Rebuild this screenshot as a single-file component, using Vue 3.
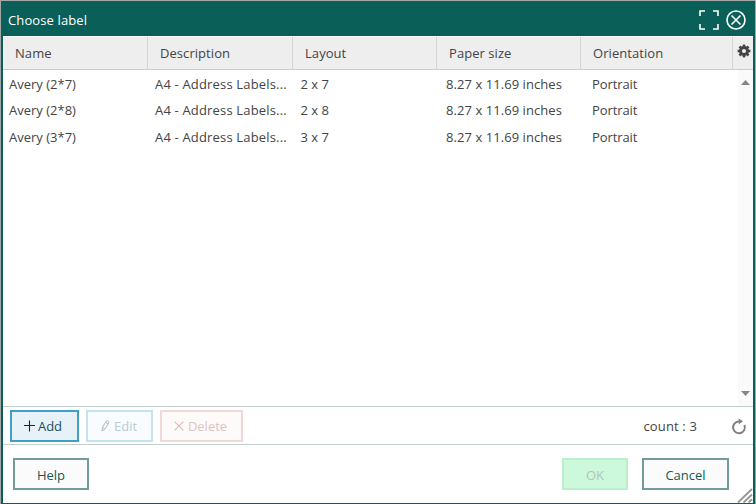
<script setup>
const columns = [
  { title: 'Name', key: 'name' },
  { title: 'Description', key: 'description' },
  { title: 'Layout', key: 'layout' },
  { title: 'Paper size', key: 'paper' },
  { title: 'Orientation', key: 'orientation' },
]
const rows = [
  { name: 'Avery (2*7)', description: 'A4 - Address Labels...', layout: '2 x 7', paper: '8.27 x 11.69 inches', orientation: 'Portrait' },
  { name: 'Avery (2*8)', description: 'A4 - Address Labels...', layout: '2 x 8', paper: '8.27 x 11.69 inches', orientation: 'Portrait' },
  { name: 'Avery (3*7)', description: 'A4 - Address Labels...', layout: '3 x 7', paper: '8.27 x 11.69 inches', orientation: 'Portrait' },
]
const teeth = [0, 45, 90, 135, 180, 225, 270, 315]
</script>

<template>
  <div class="page">
    <div class="dialog">
      <header class="title-bar">
        <span class="title">Choose label</span>
        <svg class="expand" width="20" height="20" viewBox="0 0 20 20">
          <path d="M1 6V1H6M14 1H19V6M19 14V19H14M6 19H1V14" />
        </svg>
        <svg class="close" width="20" height="20" viewBox="0 0 20 20">
          <circle cx="10" cy="10" r="9" />
          <path d="M5.5 5.5L14.5 14.5M14.5 5.5L5.5 14.5" />
        </svg>
      </header>
      <div class="head">
        <div v-for="c in columns" :key="c.key" class="th">{{ c.title }}</div>
        <div class="gear">
          <svg width="14" height="14" viewBox="-7 -7 14 14">
            <rect v-for="a in teeth" :key="a" x="-1.3" y="-6.4" width="2.6" height="3.5" :transform="`rotate(${a})`" fill="#444" />
            <circle r="3.5" fill="none" stroke="#444" stroke-width="2.9" />
          </svg>
        </div>
      </div>
      <div class="body">
        <div class="rows">
          <div v-for="r in rows" :key="r.name" class="row">
            <div v-for="c in columns" :key="c.key" class="td" :class="c.key">{{ r[c.key] }}</div>
          </div>
        </div>
        <div class="scroll">
          <svg width="9" height="5" viewBox="0 0 9 5"><path d="M0 5L4.5 0L9 5Z" fill="#868686" /></svg>
          <svg width="9" height="5" viewBox="0 0 9 5"><path d="M0 0L4.5 5L9 0Z" fill="#868686" /></svg>
        </div>
      </div>
      <div class="toolbar">
        <button class="btn add">
          <svg width="12" height="12" viewBox="0 0 12 12"><path d="M5.5 .5V11.5M0 5.5H11" stroke="#222" stroke-width="1.1" /></svg>
          <span>Add</span>
        </button>
        <button class="btn edit">
          <svg width="9" height="12" viewBox="0 0 9 12"><path d="M1 11L1.5 7.3L5.2 1.2Q6.4 .2 7.4 1.2Q8.2 2 7.6 3.1L3.9 9.3L1 11M4.6 2.3L7 4M1.5 7.3L3.9 9.3" fill="none" stroke="#b4b8ba" stroke-width="1" /></svg>
          <span>Edit</span>
        </button>
        <button class="btn delete">
          <svg width="10" height="10" viewBox="0 0 10 10"><path d="M.6 .6L9.4 9.4M9.4 .6L.6 9.4" stroke="#e0b8b6" stroke-width="1.1" /></svg>
          <span>Delete</span>
        </button>
        <span class="count">count : 3</span>
        <svg class="refresh" width="16" height="17" viewBox="0 0 16 17">
          <path d="M8.5 3.4H7.8A5.9 5.9 0 1 0 13.4 7" fill="none" stroke="#808080" stroke-width="2" />
          <path d="M7.6 .4L12 3.2L7.9 6.2Z" fill="#808080" />
        </svg>
      </div>
      <footer class="footer">
        <button class="btn plain help"><span>Help</span></button>
        <button class="btn ok"><span>OK</span></button>
        <button class="btn plain cancel"><span>Cancel</span></button>
        <svg class="grip" width="16" height="15" viewBox="0 0 16 15">
          <path d="M1 14.5L15 1M6.5 14.5L15 6.5M11.5 14.5L15 11.2" stroke="#999" stroke-width="2" fill="none" />
        </svg>
      </footer>
    </div>
  </div>
</template>

<style>
body {
  margin: 0;
  overflow: hidden;
}
</style>

<style scoped>
.page {
  box-sizing: border-box;
  width: 756px;
  height: 504px;
  padding: 1px 1px 0;
  background: #a3a8a7;
  font-family: "Open Sans", "Noto Sans", sans-serif;
  font-size: 13px;
  color: #444;
}
.dialog {
  box-sizing: border-box;
  height: 503px;
  padding: 0 2px 1px;
  background: #0a5f58;
  display: flex;
  flex-direction: column;
}
.title-bar {
  height: 35px;
  display: flex;
  align-items: center;
  color: #fff;
  padding: 2px 7px 0 5px;
  box-sizing: border-box;
}
.title {
  flex: 1;
  letter-spacing: 0.12px;
}
.title-bar svg {
  fill: none;
  stroke: #fff;
  stroke-width: 1.6;
}
.expand {
  margin-right: 7px;
}
.head {
  box-sizing: border-box;
  height: 34px;
  border-top: 1px solid #fff;
  border-bottom: 1px solid #ccc;
  background: #eee;
  display: grid;
  grid-template-columns: 145px 145px 144px 144px 152px 20px;
}
.th {
  box-sizing: border-box;
  padding-left: 12px;
  border-right: 1px solid #d4d4d4;
  line-height: 33px;
  white-space: nowrap;
  letter-spacing: 0.06px;
}
.gear {
  padding: 7px 0 0 4px;
}
.gear svg {
  display: block;
}
.body {
  flex: none;
  height: 336px;
  background: #fff;
  display: flex;
}
.rows {
  flex: 1;
  padding-top: 1px;
}
.row {
  display: grid;
  grid-template-columns: 146px 145.5px 145.5px 146px 1fr;
  height: 27px;
  line-height: 26px;
}
.row:first-child {
  height: 26px;
}
.td {
  padding-left: 6px;
  white-space: nowrap;
}
.description {
  letter-spacing: 0.17px;
}
.paper {
  letter-spacing: 0.06px;
}
.orientation {
  letter-spacing: -0.1px;
}
.scroll {
  box-sizing: border-box;
  width: 15px;
  padding: 10px 3px 10px;
  background: #fafafa;
  display: flex;
  flex-direction: column;
  justify-content: space-between;
}
.toolbar {
  box-sizing: border-box;
  height: 39px;
  border-top: 1px solid #c3cfcc;
  border-bottom: 1px solid #c3cfcc;
  background: #fff;
  display: flex;
  align-items: center;
  padding: 1px 6px 0 7px;
}
.btn {
  box-sizing: border-box;
  height: 32px;
  border: 2px solid;
  padding: 0;
  margin: 0;
  font: inherit;
  display: flex;
  align-items: center;
  justify-content: center;
  border-radius: 0;
}
.add {
  width: 69px;
  margin-right: 7px;
  padding-right: 3px;
  background: #e6f1f8;
  border-color: #3ea0c4;
  color: #17505c;
  gap: 2px;
}
.edit {
  width: 67px;
  margin-right: 7px;
  padding-right: 1px;
  background: #f8fcff;
  border-color: #c5e3ee;
  color: #b9cbd0;
  gap: 4px;
}
.delete {
  width: 83px;
  padding-right: 2px;
  background: #fdfbfa;
  border-color: #efd8d6;
  color: #e2c2c0;
  gap: 4px;
}
.count {
  margin-left: auto;
  margin-right: 34px;
  letter-spacing: 0.15px;
}
.footer {
  position: relative;
  flex: 1;
  background: #fff;
  display: flex;
  align-items: flex-start;
  padding: 13px 24px 0 10px;
}
.plain {
  background: #fbfbfb;
  border-color: #729c9a;
  color: #0d5b55;
}
.footer .btn {
  padding-top: 2px;
}
.help {
  width: 76px;
  margin-right: auto;
}
.ok {
  width: 66px;
  margin-right: 14px;
  background: #ccf8dc;
  border-color: #bdeecb;
  color: #b3c4bb;
}
.cancel {
  width: 87px;
}
.grip {
  position: absolute;
  right: 0;
  bottom: 0;
}
</style>
